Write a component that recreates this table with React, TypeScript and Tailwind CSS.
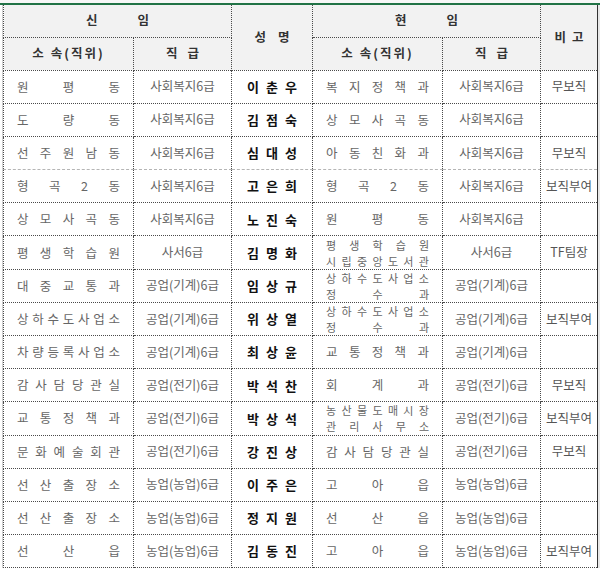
import React from "react";

type Row = {
  from: string[];
  fromGrade: string;
  name: string;
  to: string[];
  toGrade: string;
  note: string;
};

const rows: Row[] = [
  { from: ["원평동"], fromGrade: "사회복지6급", name: "이춘우", to: ["복지정책과"], toGrade: "사회복지6급", note: "무보직" },
  { from: ["도량동"], fromGrade: "사회복지6급", name: "김점숙", to: ["상모사곡동"], toGrade: "사회복지6급", note: "" },
  { from: ["선주원남동"], fromGrade: "사회복지6급", name: "심대성", to: ["아동친화과"], toGrade: "사회복지6급", note: "무보직" },
  { from: ["형곡2동"], fromGrade: "사회복지6급", name: "고은희", to: ["형곡2동"], toGrade: "사회복지6급", note: "보직부여" },
  { from: ["상모사곡동"], fromGrade: "사회복지6급", name: "노진숙", to: ["원평동"], toGrade: "사회복지6급", note: "" },
  { from: ["평생학습원"], fromGrade: "사서6급", name: "김명화", to: ["평생학습원", "시립중앙도서관"], toGrade: "사서6급", note: "TF팀장" },
  { from: ["대중교통과"], fromGrade: "공업(기계)6급", name: "임상규", to: ["상하수도사업소", "정수과"], toGrade: "공업(기계)6급", note: "" },
  { from: ["상하수도사업소"], fromGrade: "공업(기계)6급", name: "위상열", to: ["상하수도사업소", "정수과"], toGrade: "공업(기계)6급", note: "보직부여" },
  { from: ["차량등록사업소"], fromGrade: "공업(기계)6급", name: "최상윤", to: ["교통정책과"], toGrade: "공업(기계)6급", note: "" },
  { from: ["감사담당관실"], fromGrade: "공업(전기)6급", name: "박석찬", to: ["회계과"], toGrade: "공업(전기)6급", note: "무보직" },
  { from: ["교통정책과"], fromGrade: "공업(전기)6급", name: "박상석", to: ["농산물도매시장", "관리사무소"], toGrade: "공업(전기)6급", note: "보직부여" },
  { from: ["문화예술회관"], fromGrade: "공업(전기)6급", name: "강진상", to: ["감사담당관실"], toGrade: "공업(전기)6급", note: "무보직" },
  { from: ["선산출장소"], fromGrade: "농업(농업)6급", name: "이주은", to: ["고아읍"], toGrade: "농업(농업)6급", note: "" },
  { from: ["선산출장소"], fromGrade: "농업(농업)6급", name: "정지원", to: ["선산읍"], toGrade: "농업(농업)6급", note: "" },
  { from: ["선산읍"], fromGrade: "농업(농업)6급", name: "김동진", to: ["고아읍"], toGrade: "농업(농업)6급", note: "보직부여" },
];

// spreads each character across the cell, like Excel's distributed alignment
function Dist({ lines }: { lines: string[] }) {
  const multi = lines.length > 1;
  return (
    <div className={`flex flex-col px-[13px] ${multi ? "text-[11px]" : ""}`}>
      {lines.map((line, i) => (
        <div key={i} className={`flex justify-between ${multi ? "leading-[16px]" : "leading-[18px]"}`}>
          {Array.from(line).map((ch, j) => (
            <span key={j}>{ch}</span>
          ))}
        </div>
      ))}
    </div>
  );
}

const cell = "border border-dotted border-[#4a4a4a] p-0 text-center align-middle";
const head = `${cell} bg-[#f2f2f2] font-bold text-[#333] text-[12.5px]`;

export default function App() {
  return (
    <div
      className="w-[600px] h-[571px] overflow-hidden bg-white"
      style={{ fontFamily: '"Noto Sans CJK KR", "Noto Sans", sans-serif' }}
    >
      <div className="h-[3px] bg-[#f7f7f7]" />
      <div className="h-[2px] bg-[#217346]" />
      <div className="flex">
        <div className="w-[3px] shrink-0 border-r border-[#d0d0d0] bg-white" />
        <table className="table-fixed border-collapse w-[594px] border-r border-r-[#333] text-[12.5px] text-[#666]">
          <colgroup>
            <col className="w-[130px]" />
            <col className="w-[98px]" />
            <col className="w-[81px]" />
            <col className="w-[130px]" />
            <col className="w-[98px]" />
            <col className="w-[57px]" />
          </colgroup>
          <thead>
            <tr className="h-[32px]">
              <th colSpan={2} className={`${head} border-t-0 tracking-[40px] pl-[40px]`}>신임</th>
              <th rowSpan={2} className={`${head} border-t-0 tracking-[12px] pl-[12px]`}>성명</th>
              <th colSpan={2} className={`${head} border-t-0 tracking-[40px] pl-[40px]`}>현임</th>
              <th rowSpan={2} className={`${head} border-t-0 tracking-[6px] pl-[6px]`}>비고</th>
            </tr>
            <tr className="h-[33px]">
              <th className={`${head} tracking-[2px]`}>소 속(직위)</th>
              <th className={`${head} tracking-[10px] pl-[10px]`}>직급</th>
              <th className={`${head} tracking-[2px]`}>소 속(직위)</th>
              <th className={`${head} tracking-[10px] pl-[10px]`}>직급</th>
            </tr>
          </thead>
          <tbody>
            {rows.map((r, i) => {
              const b = i === 2 ? `${cell} [border-bottom-style:dashed] [border-bottom-color:#b5b5b5]` : cell;
              return (
                <tr key={i} className="h-[33.2px]">
                  <td className={b}>
                    <Dist lines={r.from} />
                  </td>
                  <td className={b}>{r.fromGrade}</td>
                  <td className={`${b} font-bold text-[#111] text-[13px] tracking-[7px] pl-[7px]`}>{r.name}</td>
                  <td className={b}>
                    <Dist lines={r.to} />
                  </td>
                  <td className={b}>{r.toGrade}</td>
                  <td className={`${b} text-[#555]`}>{r.note}</td>
                </tr>
              );
            })}
          </tbody>
        </table>
        <div className="flex-1 bg-[#e8e8e8]" />
      </div>
    </div>
  );
}
